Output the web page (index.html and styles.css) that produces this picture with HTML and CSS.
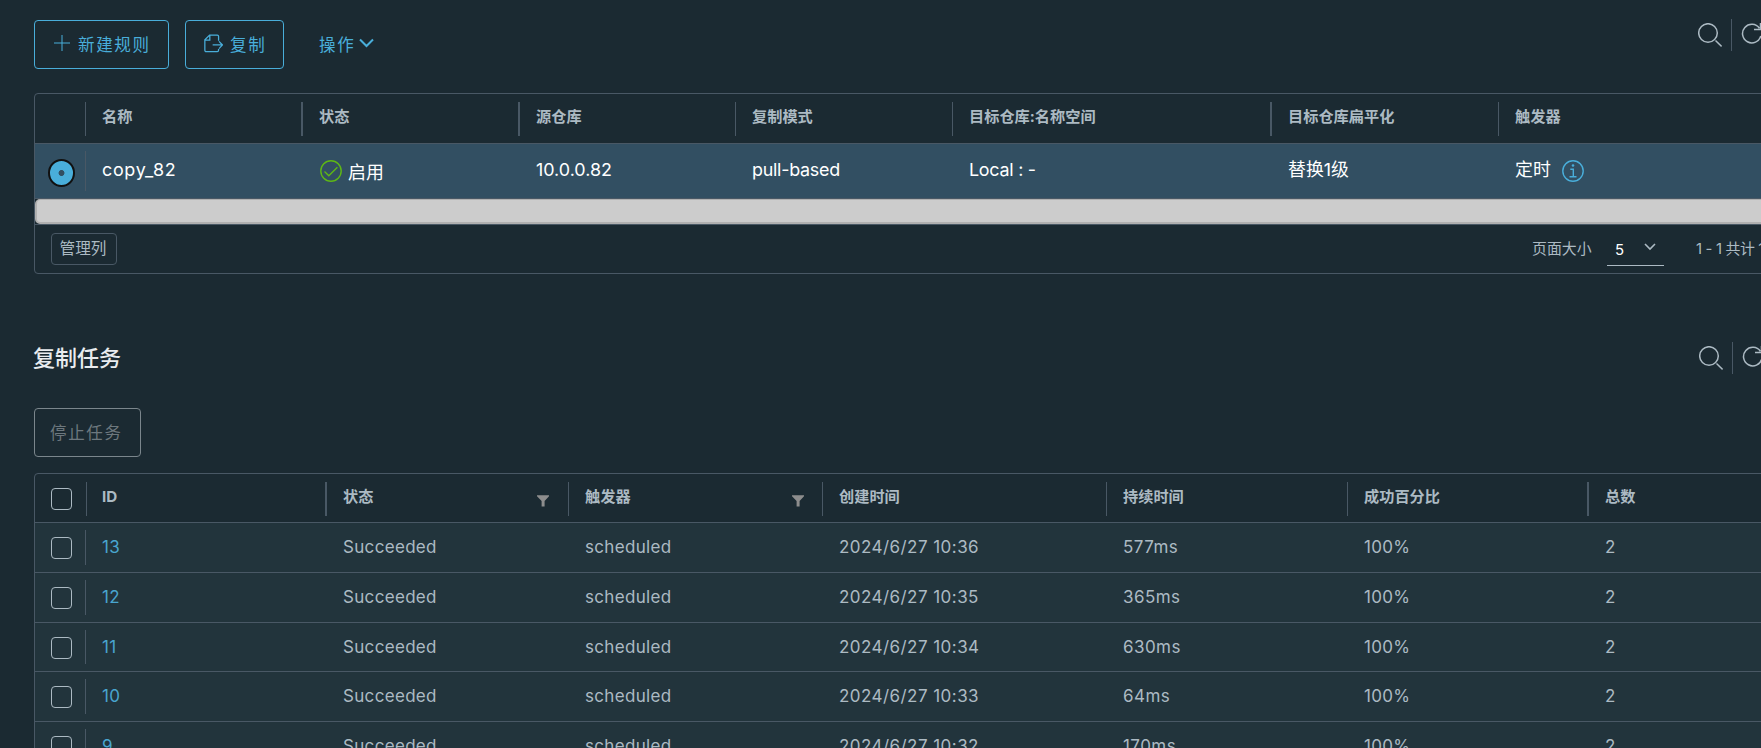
FILE: index.html
```html
<!DOCTYPE html>
<html lang="zh-CN">
<head>
    <meta charset="UTF-8">
    <meta name="viewport" content="width=device-width, initial-scale=1.0">
    <title>复制管理</title>
    <link rel="stylesheet" href="styles.css">
</head>
<body>
    <svg class="defs">
        <symbol id="search" viewBox="0 0 24 24"><circle cx="10" cy="10" r="9.3"/><path d="M17.5 17.5L23.6 23.4"/></symbol>
        <symbol id="refresh" viewBox="0 0 24 24"><path d="M18.4 5.2A9.3 9.3 0 1 0 19.8 13M19.5 0v6.5h-6.5"/></symbol>
        <symbol id="filter" viewBox="0 0 12 12"><path d="M0 0.3h12v1L7.6 6v5.6H4.6V6L0 1.3z"/></symbol>
    </svg>
    <div class="page">
        <div class="toolbar">
            <button class="btn">
                <svg class="plus" viewBox="0 0 16 16"><path d="M8 0v16M0 8h16"/></svg>新建规则
            </button>
            <button class="btn btn-copy">
                <svg class="export" viewBox="0 0 18 18"><path d="M13.8 6.5V2.2a1.2 1.2 0 0 0-1.2-1.2H5.3L.8 5.5v10a1.2 1.2 0 0 0 1.2 1.2h10.6a1.2 1.2 0 0 0 1.2-1.2v-1.2M.8 5.8h4.7V1M8.2 10.4h9M14.2 7l3.3 3.4-3.3 3.4"/></svg>复制
            </button>
            <button class="btn btn-link">操作<svg class="caret" viewBox="0 0 15 10"><path d="M1 1.5l6.5 6.5 6.5-6.5"/></svg></button>
            <div class="tools">
                <svg class="icon"><use href="#search"/></svg>
                <span class="line"></span>
                <svg class="icon"><use href="#refresh"/></svg>
            </div>
        </div>

        <div class="grid rules">
            <div class="row head">
                <div></div>
                <div><span>名称</span></div>
                <div><span class="wide">状态</span></div>
                <div><span class="wide">源仓库</span></div>
                <div><span>复制模式</span></div>
                <div><span>目标仓库:名称空间</span></div>
                <div><span class="wide">目标仓库扁平化</span></div>
                <div><span>触发器</span></div>
            </div>
            <div class="row selected">
                <div class="check"><i class="radio"></i></div>
                <div class="first name">copy_82</div>
                <div class="status"><svg class="round ok" viewBox="0 0 22 22"><circle cx="11" cy="11" r="10.2"/><path d="M4.5 11.5l4.3 4.2 8.6-8.4"/></svg>启用</div>
                <div class="ip">10.0.0.82</div>
                <div class="mode">pull-based</div>
                <div class="mode">Local : -</div>
                <div class="ip">替换1级</div>
                <div>定时<svg class="round info" viewBox="0 0 22 22"><circle cx="11" cy="11" r="10.2"/><path d="M8.3 9.3h3v7.2M7.5 16.7h7"/><circle class="dot" cx="11" cy="5.5" r="1.3"/></svg></div>
            </div>
            <div class="scrollbar"></div>
            <div class="foot">
                <button class="manage">管理列</button>
                <span class="size">页面大小</span>
                <span class="select">5<svg class="down" viewBox="0 0 12 8"><path d="M1 1l5 5 5-5"/></svg></span>
                <span class="total">1 - 1 共计 1 条</span>
            </div>
        </div>

        <div class="title">
            <h2>复制任务</h2>
            <div class="tools">
                <svg class="icon"><use href="#search"/></svg>
                <span class="line"></span>
                <svg class="icon"><use href="#refresh"/></svg>
            </div>
        </div>
        <button class="btn btn-stop">停止任务</button>

        <div class="grid tasks">
            <div class="row head">
                <div class="check"><i class="box"></i></div>
                <div><span class="id">ID</span></div>
                <div><span class="wide">状态</span><svg class="filter"><use href="#filter"/></svg></div>
                <div><span>触发器</span><svg class="filter last"><use href="#filter"/></svg></div>
                <div><span>创建时间</span></div>
                <div><span>持续时间</span></div>
                <div><span>成功百分比</span></div>
                <div><span class="wide">总数</span></div>
            </div>
            <div class="row">
                <div class="check"><i class="box"></i></div>
                <div class="first"><a>13</a></div>
                <div>Succeeded</div>
                <div>scheduled</div>
                <div class="time">2024/6/27 10:36</div>
                <div class="time">577ms</div>
                <div>100%</div>
                <div>2</div>
            </div>
            <div class="row">
                <div class="check"><i class="box"></i></div>
                <div class="first"><a>12</a></div>
                <div>Succeeded</div>
                <div>scheduled</div>
                <div class="time">2024/6/27 10:35</div>
                <div class="time">365ms</div>
                <div>100%</div>
                <div>2</div>
            </div>
            <div class="row">
                <div class="check"><i class="box"></i></div>
                <div class="first"><a>11</a></div>
                <div>Succeeded</div>
                <div>scheduled</div>
                <div class="time">2024/6/27 10:34</div>
                <div class="time">630ms</div>
                <div>100%</div>
                <div>2</div>
            </div>
            <div class="row">
                <div class="check"><i class="box"></i></div>
                <div class="first"><a>10</a></div>
                <div>Succeeded</div>
                <div>scheduled</div>
                <div class="time">2024/6/27 10:33</div>
                <div class="time">64ms</div>
                <div>100%</div>
                <div>2</div>
            </div>
            <div class="row">
                <div class="check"><i class="box"></i></div>
                <div class="first"><a>9</a></div>
                <div>Succeeded</div>
                <div>scheduled</div>
                <div class="time">2024/6/27 10:32</div>
                <div class="time">170ms</div>
                <div>100%</div>
                <div>2</div>
            </div>
        </div>
    </div>
</body>
</html>
```
FILE: styles.css
```css
*{
    box-sizing: border-box;
}
body{
    margin: 0;
    height: 748px;
    overflow: hidden;
    background: #1b2a32;
    color: #acbac3;
    font-family: Inter, "Noto Sans CJK SC", sans-serif;
    font-size: 17px;
}
svg{
    fill: none;
    stroke: currentColor;
    flex: none;
}
.defs{
    display: none;
}
.page{
    width: 1840px;
    padding: 20px 0 0 34px;
}
.toolbar{
    display: flex;
    height: 49px;
    margin-bottom: 24px;
}
.btn{
    display: flex;
    align-items: center;
    height: 49px;
    padding: 0 0 1px 19px;
    border: 1px solid #49aeda;
    border-radius: 4px;
    background: none;
    color: #49aeda;
    font-family: inherit;
    font-size: 16.5px;
    letter-spacing: 1.65px;
    width: 135px;
}
.btn-copy{
    width: 99px;
    margin-left: 16px;
    padding-left: 18px;
}
.btn-link{
    border-color: transparent;
    margin-left: 15px;
    width: 100px;
}
.plus{
    width: 16px;
    height: 16px;
    margin: -2px 8px 0 0;
}
.export{
    width: 19px;
    height: 19px;
    margin: -2px 7px 0 0;
    stroke-width: 1.2;
}
.caret{
    width: 15px;
    height: 10px;
    margin: -2px 0 0 4px;
    stroke-width: 2;
}
.tools{
    display: flex;
    margin-left: auto;
    width: 142px;
}
.tools .icon{
    width: 24px;
    height: 24px;
    margin-top: 3px;
    stroke-width: 1.5;
}
.tools .line{
    width: 1px;
    height: 32px;
    margin: -1px 9px 0;
    background: #495865;
}
.grid{
    border: 1px solid #495865;
    border-radius: 4px;
    overflow: hidden;
}
.row{
    display: grid;
}
.row > div{
    display: flex;
}
.rules .row{
    grid-template-columns: 50px 216px 217px 217px 217px 318px 228px 1fr;
}
.tasks .row{
    grid-template-columns: 50px 240px 243px 254px 284px 241px 240px 1fr;
}

/* 表头 */
.head{
    height: 49px;
    font-size: 15.2px;
    font-weight: bold;
}
.tasks .head{
    height: 48px;
}
.head span{
    height: 34px;
    margin-top: 8px;
    padding-left: 16px;
    border-left: 1px solid #495865;
    line-height: 29px;
}
.head .wide{
    border-left-width: 2px;
}
.head .id{
    margin-left: 1px;
    padding-left: 15px;
}

/* 规则列表 */
.selected{
    height: 56px;
    border-top: 1px solid #495865;
    border-bottom: 1px solid #495865;
    background: #324f62;
    color: #fff;
    font-size: 17.9px;
}
.selected > div{
    padding: 12px 0 0 17px;
    line-height: 27px;
}
.selected > .ip{
    padding-left: 18px;
}
.row > .check{
    padding: 0;
    justify-content: center;
}
.row > .first{
    position: relative;
    padding-left: 17px;
}
.first::before{
    content: "";
    position: absolute;
    left: 0;
    top: 7px;
    bottom: 7px;
    width: 1px;
    background: #495865;
}
.name{
    letter-spacing: 0.7px;
}
.mode{
    letter-spacing: -0.25px;
}
.radio{
    width: 27px;
    height: 28px;
    margin: 15px 0 0 3px;
    border: 2px solid #111;
    border-radius: 50%;
    background: radial-gradient(circle, #324f62 2.6px, #49aeda 3.3px);
}
.round{
    width: 22px;
    height: 22px;
    margin-top: 4px;
    stroke-width: 1.4;
}
.ok{
    margin: 1px 6px 0 0;
    color: #5eb715;
}
.row > .status{
    padding-left: 19px;
    padding-top: 15px;
}
.info{
    margin-left: 11px;
    color: #49aeda;
}
.info .dot{
    fill: currentColor;
    stroke: none;
}
.scrollbar{
    height: 25px;
    border: 1px solid #b0b0b0;
    border-width: 1px 1px 2px 2px;
    border-radius: 5px;
    background: #ccc;
}
.foot{
    display: flex;
    height: 49px;
    border-top: 1px solid #495865;
    padding: 8px 0 0 16px;
    font-size: 14.9px;
    line-height: 32px;
}
.manage{
    width: 66px;
    height: 32px;
    padding: 0 2px 1px 0;
    border: 1px solid #495865;
    border-radius: 4px;
    background: none;
    color: inherit;
    font: inherit;
    font-size: 15.6px;
    line-height: 26px;
}
.size{
    margin-left: 1415px;
    width: 75px;
}
.select{
    display: flex;
    align-items: center;
    width: 57px;
    height: 33px;
    padding: 2px 0 0 8px;
    border-bottom: 1px solid #acbac3;
    color: #fff;
}
.down{
    width: 12px;
    height: 8px;
    margin: -6px 0 0 20px;
    color: #acbac3;
    stroke-width: 1.6;
}
.total{
    margin-left: 32px;
    letter-spacing: -0.35px;
}

/* 复制任务 */
.title{
    display: flex;
    height: 66px;
    margin-top: 68px;
}
.title h2{
    margin: 0 0 0 -1px;
    color: #e9ecef;
    font-size: 22px;
    font-weight: 500;
    line-height: 33px;
}
.title .tools{
    width: 141px;
}
.title .icon{
    margin-top: 4px;
}
.title .line{
    margin-top: 0;
}
.btn-stop{
    width: 107px;
    margin-bottom: 16px;
    padding-left: 15px;
    border-color: #7b868c;
    color: #6d787e;
}
.tasks .row:not(.head){
    height: 49.75px;
    border-top: 1px solid #495865;
    background: #22343c;
    letter-spacing: 0.32px;
}
.tasks .row:not(.head) > div{
    padding-left: 17px;
    line-height: 48px;
}
.tasks .row:not(.head) > div:nth-child(3),
.tasks .row:not(.head) > div:nth-child(8){
    padding-left: 18px;
}
.tasks .row:not(.head) > .check{
    padding: 0;
}
.tasks .time{
    letter-spacing: 0.45px;
}
.box{
    width: 21px;
    height: 22px;
    margin: 14px 0 0 3px;
    border: 1px solid #acbac3;
    border-radius: 4px;
}
.tasks a{
    color: #49a5cf;
}
.filter{
    width: 12px;
    height: 12px;
    margin: 21px 19px 0 auto;
    fill: #8d8d8d;
    stroke: none;
}
.last{
    margin-right: 18px;
}
```
